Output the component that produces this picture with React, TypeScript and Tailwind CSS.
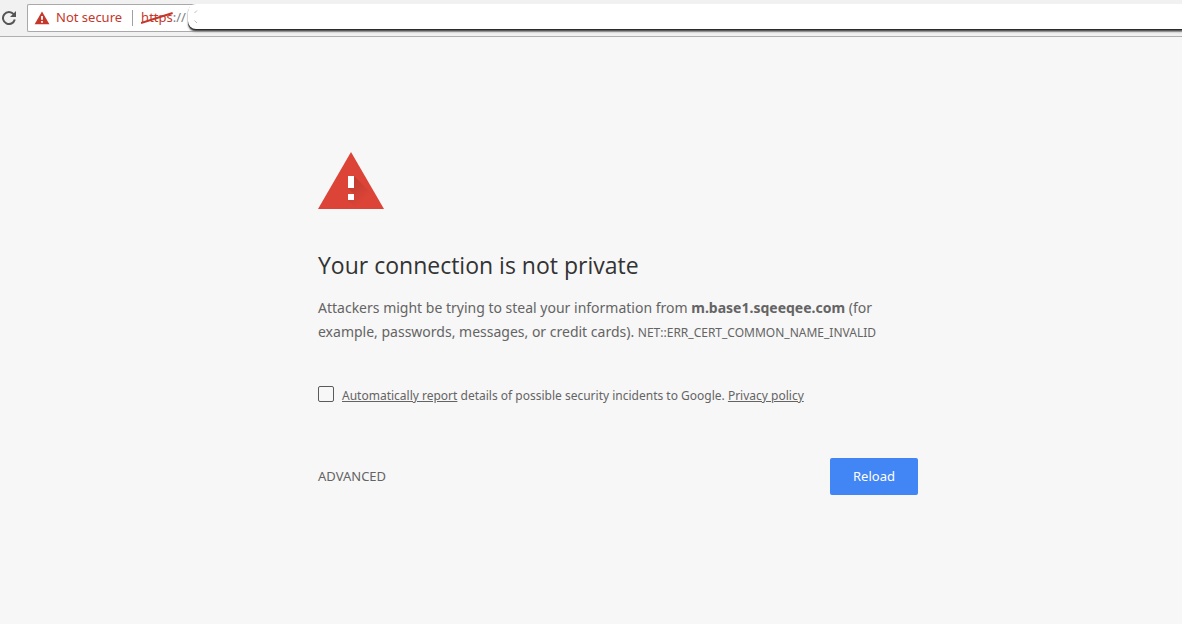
import React from 'react';

const ReloadIcon: React.FC = () => (
  <svg className="ml-0.5 h-3.5 w-3.5" viewBox="0 0 14 14" aria-hidden="true">
    <path d="M11.6 3.2 A6 6 0 1 0 12.8 8.6" stroke="#555" strokeWidth="2" fill="none" />
    <path d="M14 0 V6 H8 Z" fill="#555" />
  </svg>
);

const WarningBadge: React.FC = () => (
  <svg className="w-4 h-[14px] shrink-0" viewBox="0 0 16 14" aria-hidden="true">
    <path d="M8 0.5 L15.4 13.3 H0.6 Z" fill="#c5372a" />
    <path d="M7.1 5 h1.8 v3.8 h-1.8 z M7.1 10 h1.8 v1.7 h-1.8 z" fill="#fff" />
  </svg>
);

const WarningTriangle: React.FC = () => (
  <svg className="w-[66px] h-[57px]" viewBox="0 0 66 57" role="img" aria-label="Warning">
    <defs>
      <linearGradient id="shade" x1="30" y1="24" x2="50" y2="44" gradientUnits="userSpaceOnUse">
        <stop offset="0" stopColor="#000" stopOpacity="0.16" />
        <stop offset="1" stopColor="#000" stopOpacity="0" />
      </linearGradient>
    </defs>
    <path d="M33 0 L66 57 H0 Z" fill="#db4437" />
    <path d="M36 24 L54 42 V57 H39 L30 48 H36 V42 L30 36 H36 Z" fill="url(#shade)" />
    <path d="M30 24 h6 v12 h-6 z M30 42 h6 v6 h-6 z" fill="#fff" />
  </svg>
);

const Toolbar: React.FC = () => (
  <header className="flex h-[37px] items-start overflow-hidden border-b border-[#b0b0b0] bg-[#f1f1f1] pt-1">
    <button type="button" aria-label="Reload page" className="flex h-7 w-[27px] shrink-0 items-center">
      <ReloadIcon />
    </button>
    <div className="relative flex h-7 flex-1 items-center rounded-l-[2px] border border-r-0 border-[#a9a9a9] bg-white pl-1.5 text-[13px]">
      <WarningBadge />
      <span className="ml-1.5 whitespace-nowrap text-[#c5372a]">Not secure</span>
      <span className="ml-2.5 h-4 w-px bg-[#a0a0a0]" />
      <span className="ml-2 whitespace-nowrap text-[#808080]">
        <span className="relative text-[#c5372a]">
          https
          <svg className="absolute left-0 top-1 h-3 w-full" viewBox="0 0 32 12" preserveAspectRatio="none" aria-hidden="true">
            <path d="M0 11 L32 1" stroke="#c5372a" strokeWidth="2" />
          </svg>
        </span>
        ://
      </span>
      {/* blanked-out part of the address */}
      <div className="absolute -top-px left-40 right-0 h-[25px] rounded-l-lg bg-white shadow-[0_1px_0_#2b2b2b,0_2px_1px_#555,0_3px_2px_#999]">
        <svg className="ml-1.5 mt-1.5 h-3.5 w-1" viewBox="0 0 4 14" aria-hidden="true">
          <path d="M3 0.5 L0.5 3 M0.5 10.5 L3 13" stroke="#bbb" fill="none" />
        </svg>
      </div>
    </div>
  </header>
);

export default function App() {
  return (
    <div className="min-h-screen bg-[#f7f7f7] font-['Noto_Sans','Open_Sans',sans-serif] text-[#646464]">
      <Toolbar />
      <main className="flex justify-center pl-[54px] pt-[115px]">
        <div className="w-full max-w-[600px]">
          <WarningTriangle />
          <h1 className="mt-10 font-['Open_Sans','Noto_Sans',sans-serif] text-[23px] leading-8 text-[#333]">
            Your connection is not private
          </h1>
          <p className="mt-[15px] text-sm leading-6">
            Attackers might be trying to steal your information from{' '}
            <strong className="font-bold">m.base1.sqeeqee.com</strong> (for
            <br />
            example, passwords, messages, or credit cards).{' '}
            <span className="text-xs">NET::ERR_CERT_COMMON_NAME_INVALID</span>
          </p>
          <div className="mt-10 flex items-start gap-2 text-xs leading-6">
            <input
              id="report"
              type="checkbox"
              className="mt-0.5 h-4 w-4 shrink-0 appearance-none rounded-[2px] border border-[#5a5a5a] bg-[#f7f7f7] checked:bg-[#4285f4]"
            />
            <label htmlFor="report" className="whitespace-nowrap">
              <a href="#report-details" className="underline">Automatically report</a> details of possible security incidents to Google.{' '}
              <a href="#privacy" className="underline">Privacy policy</a>
            </label>
          </div>
          <div className="mt-[50px] flex items-center justify-between text-[13px]">
            <button type="button">ADVANCED</button>
            <button type="button" className="h-[37px] w-[88px] rounded-[2px] bg-[#4285f4] text-white">
              Reload
            </button>
          </div>
        </div>
      </main>
    </div>
  );
}
